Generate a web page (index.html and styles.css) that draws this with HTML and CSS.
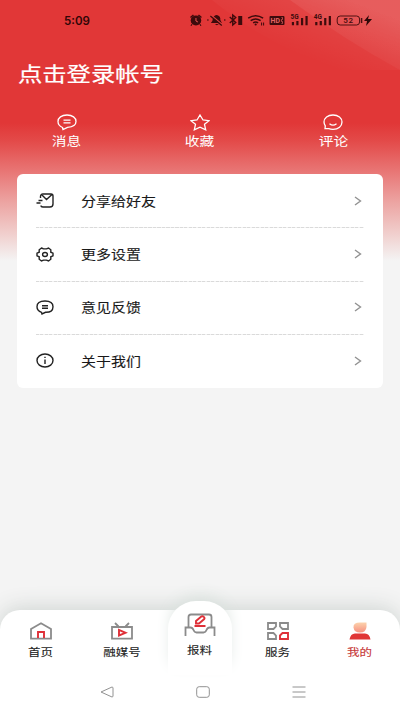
FILE: index.html
```html
<!DOCTYPE html>
<html lang="zh-CN">
<head>
<meta charset="utf-8">
<meta name="viewport" content="width=device-width, initial-scale=1">
<title>我的</title>
<link rel="stylesheet" href="styles.css">
</head>
<body>
<div class="screen">
  <header class="hero">
    <svg class="rays" width="200" height="70" viewBox="0 0 200 70"><defs><linearGradient id="ray" gradientUnits="userSpaceOnUse" x1="150" y1="0" x2="125" y2="65"><stop offset="0" stop-color="#fff" stop-opacity=".1"/><stop offset="1" stop-color="#fff" stop-opacity="0"/></linearGradient></defs><path d="M12 0H200V70H135Q65 43 12 0Z" fill="url(#ray)"/><path d="M90 0H200V70Q145 40 90 0Z" fill="url(#ray)"/></svg>
    <div class="status">
      <span class="time">5:09</span>
      <svg class="indicators" width="184" height="14" viewBox="0 0 185 14" preserveAspectRatio="none">
        <g fill="#3d0b0c"><ellipse cx="7" cy="7.5" rx="5.3" ry="4.9"/><path d="M1 4 4 1.5 5 2.5 2 5ZM13 4 10 1.5 9 2.5 12 5Z"/><path d="M3 11 2 13M11 11 12 13" stroke="#3d0b0c"/></g>
        <path d="M7 5V8L9 9" fill="none" stroke="#e45352"/>
        <g fill="#3d0b0c"><path d="M22 10Q24 8 24 5.5Q25 2 28 2Q32 3 31.5 7L33 10Z"/><circle cx="19" cy="7" r=".8"/><circle cx="36" cy="7" r=".8"/><path d="M26 11h4l-2 1.3Z"/></g>
        <path d="M22 2 34 12" stroke="#e04040" stroke-width="1.500"/><path d="M21.5 3 33 12.5" stroke="#3d0b0c" stroke-width="1.300"/>
        <path d="m41 4 6 5.5-3 2.5V2l3 2.5L41 10" fill="none" stroke="#3d0b0c" stroke-width="1.4"/><path d="M49.5 3h4v9h-4Z" fill="#3d0b0c"/>
        <path d="M59.5 5.2Q67 .2 74.500 5.200M62 7.7Q67 4.3 72 7.700M64.500 9.9Q67 8.3 69.500 9.900" fill="none" stroke="#3d0b0c" stroke-width="1.5"/><circle cx="67" cy="11.5" r="1.1" fill="#3d0b0c"/><path d="M73 9.500v3M75 9.500v3" stroke="#3d0b0c"/>
        <rect x="81" y="3" width="15" height="9" rx="1" fill="#3d0b0c"/><text class="hd" x="82" y="10.200">HD</text><path d="M93 4.500h1v2h-1v2h1v2h-1" fill="none" stroke="#e86363" stroke-width=".7"/>
        <g class="network"><text x="102" y="6.500">5G</text><text x="125.500" y="6.500">4G</text></g>
        <path d="M104.500 9v3.200M109 8v4.200M113.700 5v7.200M118.200 3v9.200M128 9v3.200M132.500 8v4.200M137 5v7.200M141.600 3v9.200" stroke="#3d0b0c" stroke-width="2.200"/>
        <rect x="149" y="3" width="22.500" height="9" rx="3" fill="none" stroke="#4c1011"/><path d="M173.500 5v5" stroke="#4c1011" stroke-width="1.500"/><text class="charge" x="155" y="10.200">52</text>
        <path d="m181 2-5 6h3l-1 5 6-7h-4Z" fill="#2d0808"/>
      </svg>
    </div>
    <h1 class="login"><span class="wide">点击登录帐号</span></h1>
    <nav class="shortcuts">
      <a><svg width="20" height="17" viewBox="0 0 20 17"><path d="M5.500 13.500Q1 11.500 1 7.500C1 3.800 4.500 1 10 1s9 2.800 9 6.500S15 13 10.500 13.300L6 15.500ZM6.500 6.200h7M6.500 8.800h7"/></svg><span class="wide">消息</span></a>
      <a><svg width="20" height="17" viewBox="0 0 20 17"><path d="m10 1 3 5 6 .7-4.500 3.600 1.200 5.500L10 13.200l-5.700 2.600 1.200-5.500L1 6.700 7 6Z"/></svg><span class="wide">收藏</span></a>
      <a><svg width="20" height="17" viewBox="0 0 20 17"><path d="M2 14.700 2.300 11.800Q1 9.800 1 8C1 4 4.800 1 10 1s9 3 9 7-3.500 7.300-9 7.300q-2.500 0-4.200-.7ZM6.500 9.800q3.500 2.700 7 0"/></svg><span class="wide">评论</span></a>
    </nav>
  </header>
  <main class="menu">
    <a class="row"><svg width="18" height="15" viewBox="0 0 18 15"><path d="M4.500 5V3.500Q4.500 1 7 1h8q2 0 2 2v8q0 3-3 3H7q-2 0-2-1.500M5.500 1.500 10.500 6.500 16 1.500M2.500 7.500h4M.5 10h4"/></svg><span class="wide">分享给好友</span><svg class="arrow" width="8" height="10" viewBox="0 0 8 10"><path d="m1 1 5.500 4L1 9"/></svg></a>
    <a class="row"><svg width="18" height="15" viewBox="0 0 18 15"><path d="m5.500 1 2 .9h3l2-.9 2.300 1.800v2.400l2.200 1v2.600l-2.200 1v2.400L12.500 14l-2-.9h-3l-2 .9-2.300-1.800V9.800L1 8.800V6.200l2.200-1V2.800Z"/><ellipse cx="9" cy="7.500" rx="2.400" ry="2"/></svg><span class="wide">更多设置</span><svg class="arrow" width="8" height="10" viewBox="0 0 8 10"><path d="m1 1 5.500 4L1 9"/></svg></a>
    <a class="row"><svg width="18" height="15" viewBox="0 0 18 15"><path d="M5.500 12.300Q1 10.800 1 6.800 1 1 9 1t8 5.800T9.500 12.300L6 14ZM6 5.700h6M6 8.200h6"/></svg><span class="wide">意见反馈</span><svg class="arrow" width="8" height="10" viewBox="0 0 8 10"><path d="m1 1 5.500 4L1 9"/></svg></a>
    <a class="row"><svg width="18" height="15" viewBox="0 0 18 15"><ellipse cx="9" cy="7.500" rx="8" ry="6.500"/><path d="M9 6.500v4.500M9 3.700v1.300"/></svg><span class="wide">关于我们</span><svg class="arrow" width="8" height="10" viewBox="0 0 8 10"><path d="m1 1 5.500 4L1 9"/></svg></a>
  </main>
  <footer class="bottom">
    <nav class="tabs">
      <a class="tab"><svg width="22" height="18" viewBox="0 0 22 18"><path class="gray" d="M1 7 11 1.300 21 7v9.700H1Z"/><path class="red" d="M8 16V10h6v6"/></svg><span class="wide">首页</span></a>
      <a class="tab"><svg width="22" height="18" viewBox="0 0 22 18"><path class="gray" d="M1 5h20v11.700H1ZM4 1l3.500 3.500M18 1l-3.500 3.500"/><path class="red" d="M8 8v5.500l6.500-2.700Z"/></svg><span class="wide">融媒号</span></a>
      <a class="tab center"><svg width="32" height="25" viewBox="0 0 32 25"><path class="gray" d="M4.500 14V4Q4.500 1.500 7 1.500h18q2.500 0 2.500 2.500v10M1.500 23v-8.500h5Q8.500 14.500 9.500 17t3 2.500h7q2 0 3-2.500t3-2.500h5V23"/><path class="red" d="M10.500 13h11M12 10.500V8l5-4.300q1.500-1 2.800.2t.2 2.400l-5 4.200Z"/></svg><span class="wide">报料</span></a>
      <a class="tab"><svg width="22" height="18" viewBox="0 0 22 18"><path class="gray" d="M1 1h8v3.500L6.500 7H1ZM13 1h8v6h-5.500L13 4.500ZM1 11h5.500L9 13.500V17H1Z"/><path class="red" d="M15.500 11H21v6h-8v-3.500Z"/></svg><span class="wide">服务</span></a>
      <a class="tab active"><svg width="22" height="18" viewBox="0 0 22 18"><defs><linearGradient id="face" x2="0" y2="1"><stop stop-color="#fcd3ad"/><stop offset="1" stop-color="#f79080"/></linearGradient></defs><path d="M.5 17.500Q1.500 11.500 6 11.500h10q4.500 0 5.500 6Z" fill="#e03536"/><path d="M11 .5h6.500V5Q17 10.500 11 10.500T4.500 5.500 11 .5Z" fill="url(#face)"/></svg><span class="wide">我的</span></a>
    </nav>
    <div class="system">
      <svg width="14" height="12" viewBox="0 0 14 12"><path d="M1 6 12 1q1 0 1 1v8q0 1-1 1Z"/></svg>
      <svg width="14" height="12" viewBox="0 0 14 12"><rect x=".7" y=".7" width="12.600" height="10.600" rx="2.500"/></svg>
      <svg width="14" height="12" viewBox="0 0 14 12"><path d="M.5 1h13M.5 6h13M.5 11h13"/></svg>
    </div>
  </footer>
</div>
</body>
</html>
```
FILE: styles.css
```css
* { box-sizing: border-box; }
body {
  margin: 0;
  font-family: "Noto Sans", "Noto Sans CJK SC", sans-serif;
}
.screen {
  height: 711px;
  display: flex;
  flex-direction: column;
  background: linear-gradient(#e13737 0, #e13737 123px, #e34a49 141px, #e87473 170px, #eca19f 200px, #f0cbc9 231px, #f4f4f4 261px);
  overflow: hidden;
}
.hero {
  height: 174px;
  position: relative;
  color: #fff;
}
.rays { position: absolute; top: 0; right: 0; }
.status {
  position: relative;
  height: 42px;
  padding: 13px 27px 0 64px;
  display: flex;
  justify-content: space-between;
  color: #300607;
}
.time {
  font: 600 11.500px/16px Inter, sans-serif;
  transform: scaleX(1);
  transform-origin: left;
}
.indicators { font-family: Roboto, sans-serif; font-weight: 700; fill: #3d0b0c; }
.hd { font-size: 7px; fill: #e86363; }
.network { font-size: 6.500px; }
.charge { font-size: 8px; font-weight: 500; letter-spacing: .8px; }
.wide {
  display: block;
  white-space: nowrap;
  transform: scaleX(1.18);
  -webkit-text-stroke: .1px currentColor;
}
.login {
  margin: 18px 0 0 18px;
  font-size: 20.600px;
  line-height: 28px;
  font-weight: 400;
}
.login .wide { transform-origin: left; -webkit-text-stroke-width: .2px; }
.shortcuts {
  display: grid;
  grid-template-columns: repeat(3, 1fr);
  margin-top: 26px;
}
.shortcuts a {
  display: flex;
  flex-direction: column;
  align-items: center;
  font-size: 12.500px;
  line-height: 20px;
}
.shortcuts svg { fill: none; stroke: #fff; stroke-width: 1.300; }
.shortcuts .wide { margin-top: 1px; -webkit-text-stroke-width: 0; }
.menu {
  margin: 0 17px;
  height: 214px;
  padding: 0 19px;
  border-radius: 6px;
  background: #fff;
}
.row {
  height: 53.400px;
  display: flex;
  align-items: center;
  color: #191919;
  font-size: 12.700px;
}
.row + .row {
  background: repeating-linear-gradient(90deg, #dadada 0 3px, #f2f2f2 3px 4.500px) top / 100% 1px no-repeat;
}
.row svg { fill: none; stroke: #222; stroke-width: 1.400; }
.row .wide { margin: -1px 0 0 27px; transform-origin: left; }
.row .arrow { margin-left: auto; margin-right: 2px; stroke: #929292; }
.bottom {
  margin-top: auto;
  height: 101px;
  border-radius: 20px 20px 0 0;
  background: #fff;
  box-shadow: 0 -2px 22px #cdd3d0;
}
.tabs {
  height: 65px;
  display: grid;
  grid-template-columns: 81px 82px 74px 82px 81px;
}
.tab {
  padding-top: 12px;
  display: flex;
  flex-direction: column;
  align-items: center;
  font-size: 10.600px;
  line-height: 17px;
  color: #222;
}
.tab svg { flex: none; fill: none; }
.tab .wide { margin-top: 4px; }
.gray { stroke: #8b8b8b; stroke-width: 1.800; }
.red { stroke: #df3038; stroke-width: 1.900; }
.center {
  height: 74px;
  margin: -9px 5px 0;
  padding-top: 12px;
  border-radius: 28px 28px 0 0;
  background: #fff;
  box-shadow: 0 -8px 16px -4px #d9e1dd;
}
.center .wide { margin-top: 4px; }
.tab.active { color: #c73838; }
.system {
  height: 36px;
  padding: 11px 94px 0 100px;
  display: flex;
  justify-content: space-between;
}
.system svg { fill: none; stroke: #929292; stroke-width: 1; }
```
